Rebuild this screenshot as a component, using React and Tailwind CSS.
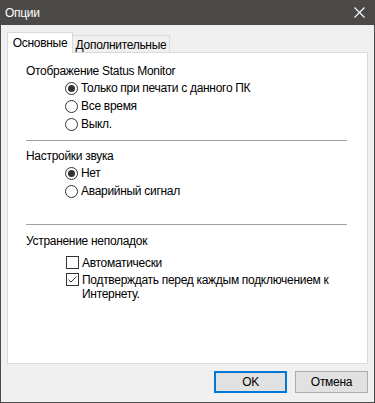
import React from "react";

const Radio = ({ checked, label }) => (
  <div className="flex items-center h-[18px]">
    <span className="w-[13px] h-[13px] rounded-full border border-[#333333] bg-white flex items-center justify-center shrink-0">
      {checked && <span className="w-[7px] h-[7px] rounded-full bg-[#333333]" />}
    </span>
    <span className="ml-[3px]">{label}</span>
  </div>
);

const Check = ({ checked, children }) => (
  <div className="flex items-start">
    <span className="mt-[2px] w-[13px] h-[13px] border border-[#333333] bg-white flex items-center justify-center shrink-0">
      {checked && (
        <svg width="11" height="11" viewBox="0 0 11 11">
          <path d="M1.5 5.5 L4 8 L9.5 2.5" fill="none" stroke="#333333" strokeWidth="1" />
        </svg>
      )}
    </span>
    <span className="ml-[3px] leading-[14px] pt-[2px] whitespace-nowrap">{children}</span>
  </div>
);

export default function App() {
  return (
    <div
      className="w-[375px] h-[403px] flex flex-col bg-[#f0f0f0] border-x border-b border-[#4b4a48] text-[12px] tracking-[-0.3px] text-black"
      style={{ fontFamily: '"Liberation Sans", Arial, sans-serif' }}
    >
      {/* Title bar */}
      <div className="h-[25px] bg-[#4b4a48] flex items-center pl-[4px] pr-[9px] shrink-0">
        <span className="text-white">Опции</span>
        <svg className="ml-auto" width="11" height="11" viewBox="0 0 11 11">
          <path d="M0.5 0.5 L10.5 10.5 M10.5 0.5 L0.5 10.5" stroke="#ffffff" strokeWidth="1.1" />
        </svg>
      </div>

      <div className="flex-1 flex flex-col px-[6px] pt-[7px]">
        {/* Tabs */}
        <div className="flex items-end h-[21px] relative z-10">
          <div className="h-[21px] w-[66px] bg-white border border-b-0 border-[#d9d9d9] flex items-center justify-center">
            Основные
          </div>
          <div className="h-[18px] w-[97px] border border-l-0 border-b-0 border-[#d9d9d9] flex items-center justify-center">
            Дополнительные
          </div>
        </div>

        {/* Panel */}
        <div className="h-[312px] -mt-px bg-white border border-[#d9d9d9] pl-[18px] pr-[20px] pt-[10px]">
          <div className="h-[16px] leading-[16px]">Отображение Status Monitor</div>
          <div className="pl-[39px]">
            <Radio checked label="Только при печати с данного ПК" />
            <Radio label="Все время" />
            <Radio label="Выкл." />
          </div>
          <div className="mt-[7px] h-px bg-[#a0a0a0]" />

          <div className="mt-[7px] h-[16px] leading-[16px]">Настройки звука</div>
          <div className="pl-[39px]">
            <Radio checked label="Нет" />
            <Radio label="Аварийный сигнал" />
          </div>
          <div className="mt-[24px] h-px bg-[#a0a0a0]" />

          <div className="mt-[8px] h-[16px] leading-[16px]">Устранение неполадок</div>
          <div className="pl-[40px] mt-[5px] flex flex-col gap-[1px]">
            <Check>Автоматически</Check>
            <Check checked>
              Подтверждать перед каждым подключением к
              <br />
              Интернету.
            </Check>
          </div>
        </div>

        {/* Buttons */}
        <div className="flex justify-end gap-[8px] mt-[7px]">
          <button className="w-[73px] h-[22px] bg-[#e1e1e1] border-2 border-[#0078d7] flex items-center justify-center">
            OK
          </button>
          <button className="w-[73px] h-[22px] bg-[#e1e1e1] border border-[#adadad] flex items-center justify-center">
            Отмена
          </button>
        </div>
      </div>
    </div>
  );
}
